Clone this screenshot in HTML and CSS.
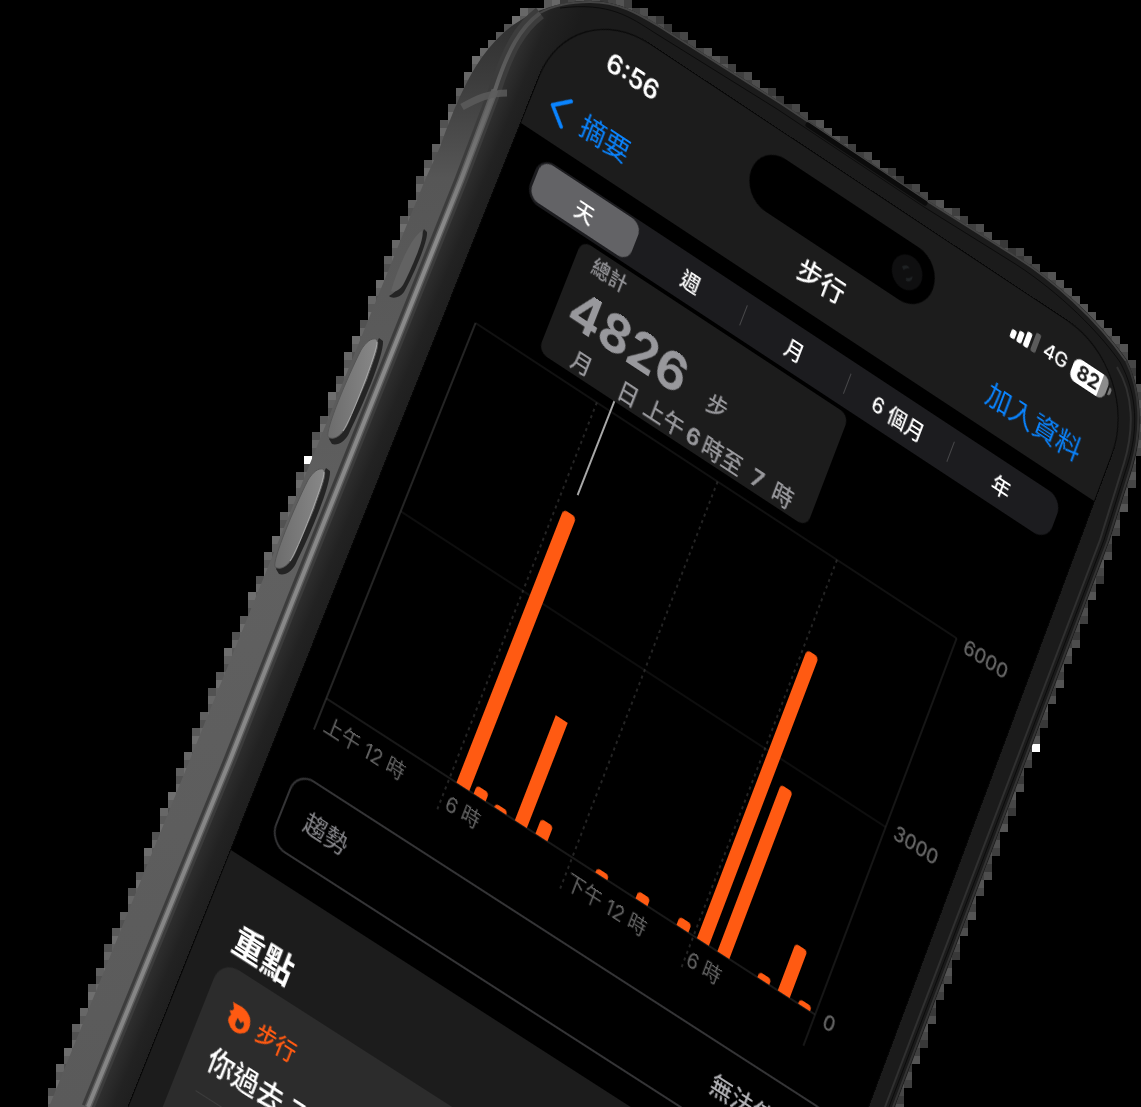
FILE: index.html
```html
<!DOCTYPE html>
<html lang="zh-Hant">
<head>
<meta charset="utf-8">
<meta name="viewport" content="width=device-width, initial-scale=1">
<title>步行</title>
<link rel="stylesheet" href="styles.css">
</head>
<body>
<main class="hero">
  <div class="device">
    <svg class="shell" viewBox="0 0 1141 1107" aria-hidden="true">
      <defs>
        <linearGradient id="side" x1="0" y1="0" x2="0" y2="1">
          <stop offset="0" stop-color="#2c2c2c"/>
          <stop offset=".07" stop-color="#3c3c3c"/>
          <stop offset=".16" stop-color="#565656"/>
          <stop offset=".5" stop-color="#606060"/>
          <stop offset="1" stop-color="#5a5a5a"/>
        </linearGradient>
        <linearGradient id="face" gradientUnits="userSpaceOnUse" x1="290" y1="600" x2="340" y2="620">
          <stop offset="0" stop-color="#343434"/>
          <stop offset=".45" stop-color="#222"/>
          <stop offset="1" stop-color="#1b1b1b"/>
        </linearGradient>
        <linearGradient id="key" x1="0" y1="0" x2="1" y2="0">
          <stop offset="0" stop-color="#6c6c6c"/>
          <stop offset="1" stop-color="#888"/>
        </linearGradient>
        <linearGradient id="shine" x1="0" y1="0" x2="0" y2="1">
          <stop offset="0" stop-color="#4c4c4c"/>
          <stop offset=".2" stop-color="#8a8a8a"/>
          <stop offset="1" stop-color="#858585"/>
        </linearGradient>
      </defs>
      <g id="fringe" shape-rendering="crispEdges"></g>
      <path id="outline" fill="url(#side)" d="M49 1107 425 180 440 147C455 105 470 70 490 47 510 22 545 1 590 1 620 1 640 14 660 26L780 102 927 200 1013 254C1052 278 1098 318 1127 360 1142 390 1144 430 1133 467L1110 540 895 1107Z"/>
      <path fill="url(#face)" d="M88 1107 230 760 293 600 461 180 495 90C508 50 520 28 540 13 556 4 572 1 590 1 620 1 640 14 660 26L780 102 927 200 1013 254C1052 278 1098 318 1127 360 1142 390 1144 430 1133 467L1110 540 895 1107Z"/>
      <path fill="none" stroke="#3c3c3c" stroke-width="13" d="M88 1107 230 760 293 600 461 180 495 90C508 50 520 28 540 13"/>
      <path fill="none" stroke="#5c5c5c" stroke-width="7" d="M88 1107 230 760 293 600 461 180 495 90"/>
      <path fill="none" stroke="url(#shine)" stroke-width="4" d="M88 1107 230 760 293 600 461 180 495 90C508 50 520 28 540 13"/>
      <path fill="none" stroke="#5c5c5c" stroke-width="7" opacity=".8" d="M462 107C478 98 490 93 507 93"/>
      <path fill="none" stroke="#444" stroke-width="2" d="M540 13C556 4 572 2 590 2 620 2 640 15 660 27L780 103 927 201 1013 255C1052 279 1097 319 1126 361"/>
      <path fill="none" stroke="#0c0c0c" stroke-width="1" d="M560 8C610 2 630 17 655 33L777 109 924 207 1009 260C1050 285 1094 325 1120 362 1138 395 1138 430 1128 463L1104 540 889 1107"/>
      <path fill="none" stroke="#303030" stroke-width="2" d="M1117 367C1134 395 1134 430 1124 463L1100 540 885 1107"/>
      <path fill="none" stroke="#333" stroke-width="2" d="M1126 361C1141 391 1142 430 1131 467L1108 540 893 1107"/>
      <path fill="none" stroke="#0b0b0b" stroke-width="5" stroke-linecap="round" d="M808 125 925 203"/>
      <path fill="#242424" d="M424 229 427 232C428 242 412 278 404 292 400 298 392 299 389 296 396 292 400 287 405 276Z"/>
      <path fill="#626262" d="M422 231C426 236 410 272 403 285 399 291 393 293 391 291 398 267 412 236 422 231Z"/>
      <g id="volume">
        <path fill="#242424" d="M379 338 383 341C384 356 361 409 350 431 346 442 337 446 332 444L329 439Z"/>
        <path fill="url(#key)" stroke="#555" d="M376 339C381 343 374 358 367 379L351 416C344 436 334 441 328 437 325 430 348 376 361 350 366 342 371 338 376 339Z"/>
        <path fill="none" stroke="#a8a8a8" d="M377 342C378 350 350 422 343 431"/>
      </g>
      <use href="#volume" x="-53" y="130"/>
    </svg>

    <div class="screen">
      <header class="top">
        <div class="status">
          <time>6:56</time>
          <span class="status-end">
            <svg width="32" height="20" viewBox="0 0 32 20" aria-hidden="true"><g fill="#fff"><rect y="11" width="6" height="9" rx="2"/><rect x="8" y="8" width="6" height="12" rx="2"/><rect x="16" y="4" width="6" height="16" rx="2"/><rect x="25" width="6" height="20" rx="2" opacity=".28"/></g></svg>
            <span class="network">4G</span>
            <span class="battery">82</span>
          </span>
        </div>
        <nav class="bar">
          <a class="back" href="#summary"><svg width="20" height="32" viewBox="0 0 20 32" aria-hidden="true"><path d="M18 2 2 16 18 30" fill="none" stroke="currentColor" stroke-width="4" stroke-linecap="round" stroke-linejoin="round"/></svg>摘要</a>
          <h1>步行</h1>
          <a class="add" href="#add">加入資料</a>
        </nav>
        <div class="island"><svg width="35" height="35" viewBox="0 0 35 35" aria-hidden="true"><circle cx="17" cy="17" r="17" fill="#0f0f10"/><path d="M10 15c2-4 5-5 8-3-2 1-4 2-5 5zM18 22c2 0 5-2 5-5 3 3 0 8-4 8z" fill="#1f2224"/></svg></div>
      </header>

      <div class="segments">
        <button class="segment on" type="button">天</button>
        <button class="segment" type="button">週</button>
        <button class="segment" type="button">月</button>
        <button class="segment" type="button">6 個月</button>
        <button class="segment" type="button">年</button>
      </div>

      <section class="chart">
        <svg class="plot" viewBox="0 0 571 404" aria-hidden="true">
          <g fill="none" stroke="#2c2c2c">
            <path d="M0 0H571" stroke="#222"/><path d="M0 204H571" stroke="#1d1d1d"/><path d="M0 404H571" stroke="#333"/>
            <path d="M0 0V437" stroke="#484848"/><path d="M571 0V437"/>
            <path d="M143 0V437M286 0V437M428 0V437" stroke="#484848" stroke-dasharray="3 4"/>
          </g>
          <path d="M159 -12V91" stroke="#a8a8a8" stroke-width="2"/>
          <g fill="#ff5a12">
            <path d="M151 404V116q0-5 5-5h5q5 0 5 5V404z"/>
            <path d="M171 404v-5q0-4 4-4h6q4 0 4 4v5z"/>
            <path d="M195 404q0-4 4-4h6q4 0 4 4z"/>
            <path d="M219 404V292h14V404z"/>
            <path d="M243 404v-12q0-4 4-4h6q4 0 4 4v12z"/>
            <path d="M313 404v-1q0-4 4-4h6q4 0 4 4v1z"/>
            <path d="M360 404v-4q0-4 4-4h6q4 0 4 4v4z"/>
            <path d="M408 404v-5q0-4 4-4h6q4 0 4 4v5z"/>
            <path d="M432 404V100q0-5 5-5h4q5 0 5 5V404z"/>
            <path d="M456 404V230q0-4 4-4h6q4 0 4 4V404z"/>
            <path d="M503 404v-2q0-4 4-4h6q4 0 4 4v2z"/>
            <path d="M527 404v-46q0-4 4-4h6q4 0 4 4v46z"/>
            <path d="M551 404v-1q0-4 4-4h6q4 0 4 4v1z"/>
          </g>
        </svg>
        <div class="values"><span>6000</span><span>3000</span><span>0</span></div>
        <div class="hours"><span>上午 12 時</span><span>6 時</span><span>下午 12 時</span><span>6 時</span></div>
        <div class="callout">
          <div class="callout-label">總計</div>
          <div class="callout-value"><strong>4826</strong><span>步</span></div>
          <div class="callout-date"><span>月</span><span>日</span><span>上午</span><b>6</b><span>時至</span><b>7</b><span>時</span></div>
        </div>
      </section>

      <button class="trend" type="button"><span>趨勢</span><span class="trend-value">無法使用</span></button>

      <section class="highlights">
        <h2>重點</h2>
        <article class="card">
          <h3><svg width="28" height="28" viewBox="0 0 28 28" aria-hidden="true"><path fill="currentColor" fill-rule="evenodd" d="M2 3C6 4 10 2 14 3 20 4 24 7 25 11 28 18 25 23 21 25 18 28 10 28 7 24 3 22 3 17 5 15L2 12C4 11 6 10 5 8zM12 14C12 17 11 20 13 22 15 24 19 23 20 20 21 17 20 15 18 14L17 17z"/></svg>步行</h3>
          <p>你過去 7 天</p>
        </article>
      </section>
    </div>
  </div>
</main>
<script src="fringe.js"></script>
</body>
</html>
```
FILE: styles.css
```css
* { box-sizing: border-box; }

body {
  margin: 0;
  background: #000;
  color: #fff;
  font-family: Inter, "Noto Sans CJK TC", sans-serif;
}

h1, h2, h3, p { margin: 0; }

button { font: inherit; color: inherit; border: 0; }

a { color: #0a84ff; text-decoration: none; }

.hero {
  min-height: 100vh;
  overflow: hidden;
  display: flex;
  justify-content: center;
}

/* The phone is a free-standing illustration, so it keeps its own size. */
.device {
  position: relative;
  flex: none;
  width: 1141px;
  height: 1107px;
  overflow: hidden;
}

.shell { display: block; width: 100%; }

/* The whole screen is laid out flat and then projected onto the phone. */
.screen {
  position: absolute;
  top: 0;
  left: 0;
  width: 686px;
  height: 1280px;
  overflow: hidden;
  border-radius: 92px 92px 0 0;
  background: #000;
  box-shadow: 0 0 0 1px #060606;
  transform-origin: 0 0;
  transform: matrix3d(.8522, .5587, 0, .00001544, -.3779, .9008, 0, -.00003267, 0, 0, 1, 0, 521, 123, 0, 1) translateY(-144px);
}

.top { position: relative; height: 144px; padding-top: 14px; background: #1c1c1c; }

.status {
  display: flex;
  align-items: center;
  justify-content: space-between;
  height: 48px;
  padding: 0 28px 0 58px;
  font-weight: 600;
  font-size: 27px;
}

.status-end { display: flex; align-items: center; gap: 6px; }

.network { font-size: 20px; font-weight: 500; }

.battery {
  position: relative;
  width: 42px;
  padding-right: 3px;
  border-radius: 8px;
  background: linear-gradient(90deg, #fff 82%, #8c8c8c 82%);
  color: #1c1c1c;
  font-size: 20px;
  font-weight: 700;
  line-height: 24px;
  text-align: center;
}

.battery::after {
  content: "";
  position: absolute;
  top: 8px;
  right: -5px;
  width: 3px;
  height: 8px;
  border-radius: 0 3px 3px 0;
  background: #777;
}

.bar {
  display: grid;
  grid-template-columns: 1fr auto 1fr;
  align-items: center;
  height: 96px;
  padding: 0 31px;
  font-size: 28px;
  line-height: 40px;
}

.back { display: flex; align-items: center; gap: 16px; margin-left: -10px; }

.bar h1 { font-size: 27px; font-weight: 500; }

.add { text-align: right; }

.island {
  position: absolute;
  top: 22px;
  left: 50%;
  display: flex;
  align-items: center;
  justify-content: flex-end;
  width: 218px;
  height: 58px;
  margin-left: -108px;
  padding-right: 13px;
  border-radius: 29px;
  background: #000;
}

.segments {
  display: grid;
  grid-template-columns: repeat(5, 1fr);
  height: 46px;
  margin: 17px 31px 0;
  padding: 2px;
  border-radius: 16px;
  background: #1c1c1f;
}

.segment {
  position: relative;
  padding: 0;
  border-radius: 12px;
  background: none;
  font-size: 21px;
  font-weight: 500;
}

.segment.on { margin: 0 5px 1px 1px; background: #636366; }

.segment:nth-child(n + 3)::before {
  content: "";
  position: absolute;
  top: 10px;
  left: 0;
  height: 22px;
  border-left: 1px solid #48484a;
}

.chart {
  position: relative;
  display: grid;
  grid-template-columns: 1fr 83px;
  margin-top: 137px;
  padding-left: 32px;
  color: #666;
  font-size: 20px;
  font-weight: 500;
}

.plot { display: block; width: 100%; overflow: visible; }

.values {
  display: flex;
  flex-direction: column;
  justify-content: space-between;
  margin: -10px 0 -12px;
  padding-left: 10px;
  line-height: 24px;
}

.hours {
  display: grid;
  grid-template-columns: repeat(4, 1fr);
  padding: 8px 0 0 8px;
  line-height: 28px;
  font-weight: 400;
  white-space: nowrap;
}

.callout {
  position: absolute;
  top: -133px;
  left: 101px;
  width: 318px;
  height: 122px;
  padding: 4px 0 0 16px;
  border-radius: 10px;
  background: #1c1c1c;
  color: #98989c;
  font-size: 23px;
}

.callout-label { padding-left: 3px; font-size: 20px; line-height: 24px; }

.callout-value { display: flex; align-items: center; gap: 28px; height: 68px; }

.callout-value strong { margin-left: -2px; font-size: 52px; font-weight: 700; }

.callout-value span { padding-top: 8px; }

.callout-date { display: flex; gap: 4px; padding-left: 18px; line-height: 24px; }

.callout-date span:nth-child(2) { margin: 0 4px 0 28px; }

.callout-date b { font-weight: 700; }

.callout-date b:nth-of-type(2) { margin: 0 8px; }

.trend {
  display: flex;
  align-items: center;
  justify-content: space-between;
  width: calc(100% - 62px);
  height: 77px;
  margin: 40px 31px 0;
  padding: 0 28px 0 24px;
  border: 2px solid #343436;
  border-radius: 20px;
  background: #000;
  color: #88888c;
  font-size: 24px;
  line-height: 36px;
}

.trend-value { color: #b0b0b4; font-weight: 500; }

.highlights {
  height: 400px;
  margin-top: 26px;
  padding: 46px 31px 0;
  background: #1c1c1c;
}

.highlights h2 { padding-left: 4px; font-size: 33px; font-weight: 700; line-height: 50px; }

.card {
  height: 400px;
  padding: 22px 24px;
  border-radius: 20px;
  background: #2c2c2c;
}

.card h3 {
  display: flex;
  align-items: center;
  gap: 6px;
  color: #ff5a12;
  font-size: 22px;
  font-weight: 500;
  line-height: 36px;
}

.card p {
  padding: 10px 0 14px;
  border-bottom: 1px solid #3c3c3c;
  font-size: 28px;
  font-weight: 500;
  line-height: 40px;
}
```
FILE: fringe.js
```js
// Fills each 8px cell that the phone's outline touches, giving the stepped rim.
const outline = document.getElementById("outline");
const fringe = document.getElementById("fringe");
const shell = document.querySelector(".shell");
const cell = 8;

function touches(x, y) {
  let inside = 0;
  for (let dx = 0; dx <= cell; dx += 2) {
    for (let dy = 0; dy <= cell; dy += 2) {
      const point = shell.createSVGPoint();
      point.x = x + dx;
      point.y = y + dy;
      if (outline.isPointInFill(point)) inside += 1;
    }
  }
  return inside > 0 && inside < 25;
}

function addCell(x, y, fill) {
  const rect = document.createElementNS("http://www.w3.org/2000/svg", "rect");
  rect.setAttribute("x", x);
  rect.setAttribute("y", y);
  rect.setAttribute("width", cell);
  rect.setAttribute("height", cell);
  rect.setAttribute("fill", fill);
  fringe.append(rect);
}

for (let y = 0; y < 1107; y += cell) {
  for (let x = 0; x < 1141; x += cell) {
    if (!touches(x, y)) continue;
    const base = x < 560 ? 82 : 56;
    const shade = base + ((x * 7 + y * 13) / cell) % 5 * 7;
    addCell(x, y, `rgb(${shade}, ${shade}, ${shade})`);
  }
}

addCell(304, 456, "#fff");
addCell(1032, 744, "#fff");
```
